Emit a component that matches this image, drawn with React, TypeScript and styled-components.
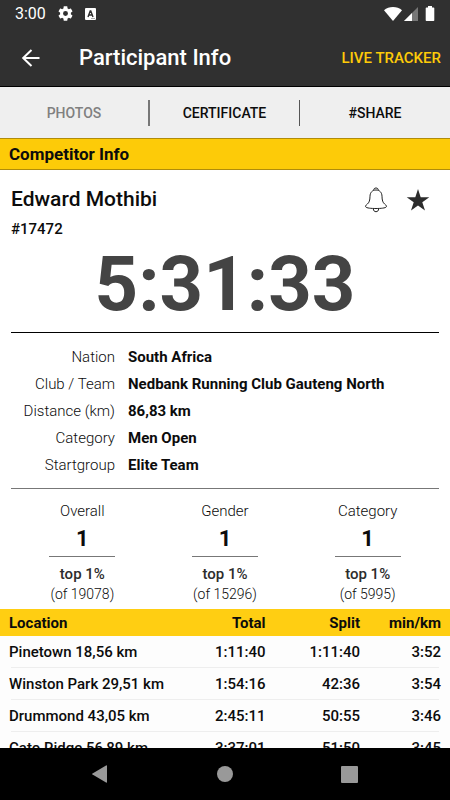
import React from 'react';
import styled, { createGlobalStyle } from 'styled-components';

const GlobalStyle = createGlobalStyle`
  * { box-sizing: border-box; }
  body {
    margin: 0;
    background: #fff;
    color: #0c0c0c;
    font-family: Roboto, "Liberation Sans", sans-serif;
    font-size: 15px;
  }
  button {
    margin: 0;
    padding: 0;
    border: 0;
    background: none;
    color: inherit;
    font: inherit;
    cursor: pointer;
  }
  svg { display: block; }
`;

const Screen = styled.div`
  display: flex;
  flex-direction: column;
  height: 100vh;
`;

const TopArea = styled.header`
  flex: none;
  background: #303030;
  border-bottom: 1px solid #000;
  color: #fff;
`;

const StatusBar = styled.div`
  display: flex;
  align-items: center;
  gap: 12px;
  height: 27px;
  padding: 0 15px;
`;

const Clock = styled.span`
  font-size: 16px;
  line-height: 28px;
`;

const StatusRight = styled.div`
  display: flex;
  align-items: center;
  gap: 2px;
  margin-left: auto;
`;

const AppBar = styled.div`
  display: flex;
  align-items: center;
  height: 59px;
  padding: 2px 9px 0 20px;
`;

const Title = styled.h1`
  flex: 1;
  margin: 0 0 0 37px;
  font-size: 22px;
  font-weight: 500;
  line-height: 24px;
`;

const LiveButton = styled.button`
  color: #fdcb08;
  font-weight: 500;
`;

const Content = styled.main`
  flex: 1;
  min-height: 0;
  overflow: hidden;
`;

const Tabs = styled.nav`
  display: grid;
  grid-template-columns: repeat(3, 1fr);
  align-items: center;
  height: 51px;
  background: #efefef;
`;

const Tab = styled.button<{ $muted?: boolean; $divider?: string }>`
  height: 26px;
  border-right: ${(p) => p.$divider ?? '0'};
  color: ${(p) => (p.$muted ? '#808080' : '#0c0c0c')};
  font-size: 14px;
  font-weight: 500;
`;

const SectionTitle = styled.h2`
  margin: 0;
  padding: 0 9px;
  background: #fdcb08;
  border: solid #b08c0a;
  border-width: 1px 0;
  font-size: 17px;
  font-weight: 700;
  line-height: 30px;
`;

const Summary = styled.section`
  padding: 0 11px;
`;

const NameRow = styled.div`
  display: flex;
  align-items: center;
  padding: 14px 9px 0 0;
`;

const Name = styled.h3`
  flex: 1;
  margin: 0;
  font-size: 21px;
  font-weight: 500;
  line-height: 30px;
`;

const IconButton = styled.button`
  margin: 2px 0 0 18px;
`;

const Bib = styled.div`
  font-weight: 500;
  line-height: 30px;
`;

const FinishTime = styled.div`
  padding-bottom: 7px;
  color: #444;
  font-size: 76px;
  font-weight: 700;
  line-height: 81px;
  text-align: center;
`;

const Details = styled.dl`
  display: grid;
  grid-template-columns: 104px 1fr;
  column-gap: 13px;
  margin: 0;
  padding: 11px 0 9px;
  border: solid #000;
  border-width: 1px 0;
  border-bottom-color: #777;
  line-height: 27px;
`;

const Label = styled.dt`
  font-weight: 300;
  text-align: right;
`;

const Value = styled.dd`
  margin: 0;
  font-weight: 700;
`;

const Ranks = styled.div`
  display: grid;
  grid-template-columns: repeat(3, 1fr);
  justify-items: center;
  padding: 12px 0 5px;
`;

const Rank = styled.div`
  display: flex;
  flex-direction: column;
  align-items: center;
`;

const RankLabel = styled.span`
  font-weight: 300;
  line-height: 20px;
`;

const Place = styled.strong`
  width: 66px;
  margin-bottom: 7px;
  border-bottom: 1px solid #777;
  font-size: 22px;
  font-weight: 700;
  line-height: 35px;
  text-align: center;
`;

const Top = styled.span`
  color: #2c2c2c;
  font-weight: 500;
  line-height: 20px;
`;

const Total = styled.span`
  font-size: 14px;
  font-weight: 300;
  line-height: 20px;
`;

const Splits = styled.table`
  width: 100%;
  table-layout: fixed;
  border-collapse: collapse;
  background: #fdfdfd;
  font-weight: 500;
`;

const HeadRow = styled.tr`
  height: 27px;
  background: #ffce12;
`;

const SplitRow = styled.tr`
  height: 32px;
  background: linear-gradient(#eee, #eee) center bottom / calc(100% - 22px) 1px no-repeat;
`;

const HeadCell = styled.th<{ $width?: string; $start?: boolean }>`
  width: ${(p) => p.$width ?? 'auto'};
  padding: ${(p) => (p.$start ? '0 0 0 9px' : '0 9px 0 0')};
  font-weight: 700;
  text-align: ${(p) => (p.$start ? 'left' : 'right')};
`;

const Cell = styled.td<{ $start?: boolean }>`
  padding: ${(p) => (p.$start ? '0 0 0 9px' : '0 9px 0 0')};
  text-align: ${(p) => (p.$start ? 'left' : 'right')};
  white-space: nowrap;
`;

const SystemNav = styled.footer`
  flex: none;
  display: flex;
  align-items: center;
  justify-content: center;
  gap: 105px;
  height: 52px;
  background: #000;
  color: #999;
`;

const details = [
  ['Nation', 'South Africa'],
  ['Club / Team', 'Nedbank Running Club Gauteng North'],
  ['Distance (km)', '86,83 km'],
  ['Category', 'Men Open'],
  ['Startgroup', 'Elite Team'],
];

const ranks = [
  { label: 'Overall', place: '1', top: 'top 1%', total: '(of 19078)' },
  { label: 'Gender', place: '1', top: 'top 1%', total: '(of 15296)' },
  { label: 'Category', place: '1', top: 'top 1%', total: '(of 5995)' },
];

const splits = [
  ['Pinetown 18,56 km', '1:11:40', '1:11:40', '3:52'],
  ['Winston Park 29,51 km', '1:54:16', '42:36', '3:54'],
  ['Drummond 43,05 km', '2:45:11', '50:55', '3:46'],
  ['Cato Ridge 56,89 km', '3:37:01', '51:50', '3:45'],
];

const GearIcon = () => (
  <svg width="15" height="15" viewBox="2 2 20 20" fill="#fff" aria-hidden="true">
    <path d="M19.14 12.94c.04-.3.06-.61.06-.94s-.02-.64-.07-.94l2.03-1.58c.18-.14.23-.41.12-.61l-1.92-3.32c-.12-.22-.37-.29-.59-.22l-2.39.96c-.5-.38-1.03-.7-1.62-.94L14.4 2.81c-.04-.24-.24-.41-.48-.41h-3.84c-.24 0-.43.17-.47.41l-.36 2.54c-.59.24-1.13.57-1.62.94l-2.39-.96c-.22-.08-.47 0-.59.22L2.74 8.87c-.12.21-.08.47.12.61l2.03 1.58c-.05.3-.09.63-.09.94s.02.64.07.94l-2.03 1.58c-.18.14-.23.41-.12.61l1.92 3.32c.12.22.37.29.59.22l2.39-.96c.5.38 1.03.7 1.62.94l.36 2.54c.05.24.24.41.48.41h3.84c.24 0 .44-.17.47-.41l.36-2.54c.59-.24 1.13-.56 1.62-.94l2.39.96c.22.08.47 0 .59-.22l1.92-3.32c.12-.22.07-.47-.12-.61zM12 15.3a3.3 3.3 0 1 1 0-6.6 3.3 3.3 0 0 1 0 6.6z" />
  </svg>
);

const KeyboardIcon = () => (
  <svg width="11" height="12" viewBox="0 0 11 12" aria-hidden="true">
    <rect width="11" height="12" rx="1" fill="#fff" />
    <path d="M3 9 5.2 3h.6L8 9M3.8 7h3.4" fill="none" stroke="#303030" strokeWidth="1.4" />
    <path d="M6.5 10.5h1m1 0h1" stroke="#303030" strokeWidth=".8" />
  </svg>
);

const WifiIcon = () => (
  <svg width="18" height="14" viewBox="0 0 18 14" aria-hidden="true">
    <path d="M0 3.2C2.5 1.1 5.600 0 9 0s6.500 1.100 9 3.200L9 14z" fill="#fff" />
  </svg>
);

const SignalIcon = () => (
  <svg width="14" height="14" viewBox="0 0 14 14" aria-hidden="true">
    <path d="M14 0v14H0z" fill="#777" />
    <path d="M8 6v8H0z" fill="#fff" />
  </svg>
);

const BatteryIcon = () => (
  <svg width="15" height="15" viewBox="0 0 15 15" aria-hidden="true">
    <path d="M8 0h4v1.500h1.500q.8 0 .8.800v11.900q0 .8-.8.800h-7q-.8 0-.8-.8V2.300q0-.8.8-.8H8z" fill="#fff" />
  </svg>
);

const BackIcon = () => (
  <svg width="22" height="18" viewBox="0 0 22 18" fill="none" stroke="#fff" strokeWidth="2" aria-hidden="true">
    <path d="M19.500 9H3M11.500 1 3.200 9l8.300 8" />
  </svg>
);

const BellIcon = () => (
  <svg width="24" height="26" viewBox="0 0 24 26" fill="none" stroke="#222" strokeWidth="1" aria-hidden="true">
    <path d="M9.700 3.300C9.700 1.800 10.500 1 12 1s2.300.8 2.300 2.300" />
    <path d="M12 3C8.200 3 6.100 5.600 6 9.200c-.1 4.200-.7 6.300-2.800 8-1.400 1.100-2 1.900-1.500 2.700C2.600 21.100 7 21.500 12 21.500s9.400-.4 10.300-1.600c.5-.8-.1-1.600-1.500-2.700-2.100-1.700-2.700-3.800-2.800-8C17.900 5.600 15.800 3 12 3z" />
    <path d="M9.300 21.700c.1 2 1.100 3 2.700 3s2.600-1 2.700-3" />
  </svg>
);

const StarIcon = () => (
  <svg width="24" height="24" viewBox="0 0 24 24" fill="#2c2c2c" aria-hidden="true">
    <path d="m12 1 2.700 8.300h8.600l-7 5 2.700 8.200-7-5.100-7 5.100 2.700-8.200-7-5h8.600z" />
  </svg>
);

export default function App() {
  return (
    <Screen>
      <GlobalStyle />
      <TopArea>
        <StatusBar>
          <Clock>3:00</Clock>
          <GearIcon />
          <KeyboardIcon />
          <StatusRight>
            <WifiIcon />
            <SignalIcon />
            <BatteryIcon />
          </StatusRight>
        </StatusBar>
        <AppBar>
          <button type="button" aria-label="Back"><BackIcon /></button>
          <Title>Participant Info</Title>
          <LiveButton type="button">LIVE TRACKER</LiveButton>
        </AppBar>
      </TopArea>

      <Content>
        <Tabs>
          <Tab type="button" $muted $divider="2px solid #777">PHOTOS</Tab>
          <Tab type="button" $divider="1px solid #555">CERTIFICATE</Tab>
          <Tab type="button">#SHARE</Tab>
        </Tabs>
        <SectionTitle>Competitor Info</SectionTitle>
        <Summary>
          <NameRow>
            <Name>Edward Mothibi</Name>
            <IconButton type="button" aria-label="Notifications"><BellIcon /></IconButton>
            <IconButton type="button" aria-label="Favourite"><StarIcon /></IconButton>
          </NameRow>
          <Bib>#17472</Bib>
          <FinishTime>5:31:33</FinishTime>
          <Details>
            {details.map(([label, value]) => (
              <React.Fragment key={label}>
                <Label>{label}</Label>
                <Value>{value}</Value>
              </React.Fragment>
            ))}
          </Details>
          <Ranks>
            {ranks.map((rank) => (
              <Rank key={rank.label}>
                <RankLabel>{rank.label}</RankLabel>
                <Place>{rank.place}</Place>
                <Top>{rank.top}</Top>
                <Total>{rank.total}</Total>
              </Rank>
            ))}
          </Ranks>
        </Summary>
        <Splits>
          <thead>
            <HeadRow>
              <HeadCell scope="col" $start>Location</HeadCell>
              <HeadCell scope="col" $width="20%">Total</HeadCell>
              <HeadCell scope="col" $width="21%">Split</HeadCell>
              <HeadCell scope="col" $width="18%">min/km</HeadCell>
            </HeadRow>
          </thead>
          <tbody>
            {splits.map(([place, total, split, pace]) => (
              <SplitRow key={place}>
                <Cell $start>{place}</Cell>
                <Cell>{total}</Cell>
                <Cell>{split}</Cell>
                <Cell>{pace}</Cell>
              </SplitRow>
            ))}
          </tbody>
        </Splits>
      </Content>

      <SystemNav>
        <button type="button" aria-label="Back">
          <svg width="20" height="20" viewBox="0 0 20 20" fill="currentColor"><path d="M16 2v16q0 1-1 .5L1.500 10.600q-1-.6 0-1.200L15 1.500q1-.5 1 .5z" /></svg>
        </button>
        <button type="button" aria-label="Home">
          <svg width="18" height="18" viewBox="0 0 18 18" fill="currentColor"><circle cx="9" cy="9" r="8" /></svg>
        </button>
        <button type="button" aria-label="Recent apps">
          <svg width="20" height="20" viewBox="0 0 20 20" fill="currentColor"><rect x="2" y="2" width="17" height="17" rx="1" /></svg>
        </button>
      </SystemNav>
    </Screen>
  );
}
